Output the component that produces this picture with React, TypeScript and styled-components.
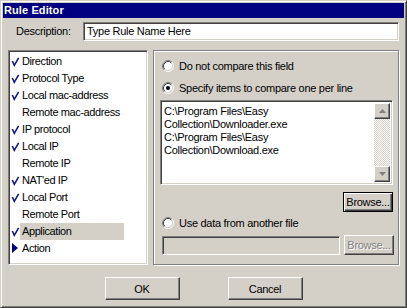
import React from "react";
import styled, { createGlobalStyle, css } from "styled-components";

const Global = createGlobalStyle`
  html, body { margin: 0; padding: 0; background: #d4d0c8; }
  body { font-family: "Liberation Sans", Arial, sans-serif; font-size: 11px; color: #000; }
  * { box-sizing: border-box; }
`;

const FACE = "#d4d0c8";

const raised = css`
  border: 1px solid;
  border-color: #fff #404040 #404040 #fff;
  box-shadow: inset -1px -1px #808080, inset 1px 1px ${FACE};
`;

const sunken = css`
  border: 1px solid;
  border-color: #808080 #fff #fff #808080;
  box-shadow: inset 1px 1px #404040, inset -1px -1px ${FACE};
`;

const Window = styled.div`
  width: 407px;
  height: 308px;
  background: ${FACE};
  border: 1px solid;
  border-color: ${FACE} #404040 #404040 ${FACE};
  box-shadow: inset 1px 1px #fff, inset -1px -1px #808080;
  padding: 2px;
  display: flex;
  flex-direction: column;
  letter-spacing: -0.28px;
`;

const TitleBar = styled.div`
  height: 15px;
  background: #000080;
  color: #fff;
  font-weight: bold;
  font-size: 11px;
  line-height: 15px;
  padding-left: 1px;
  letter-spacing: 0.1px;
`;

const DescRow = styled.div`
  display: flex;
  align-items: center;
  margin-top: 4px;
  padding-left: 13px;
`;

const Label = styled.span`
  width: 67px;
  line-height: 13px;
`;

const Field = styled.div<{ $disabled?: boolean; $w: number }>`
  ${sunken};
  width: ${(p) => p.$w}px;
  height: 19px;
  background: ${(p) => (p.$disabled ? FACE : "#fff")};
  padding: 2px 3px;
  line-height: 13px;
  white-space: nowrap;
`;

const Main = styled.div`
  display: flex;
  margin-top: 9px;
  padding-left: 5px;
  height: 216px;
  gap: 5px;
`;

const ListBox = styled.div`
  ${sunken};
  width: 140px;
  height: 215px;
  background: #fff;
  padding: 2px 2px;
  display: flex;
  flex-direction: column;
`;

const Row = styled.div`
  height: 17px;
  display: flex;
  align-items: center;
`;

const Mark = styled.svg`
  width: 9px;
  height: 17px;
  flex: none;
`;

const ItemLabel = styled.span<{ $selected?: boolean }>`
  width: 104px;
  height: 17px;
  line-height: 17px;
  padding-left: 2px;
  white-space: nowrap;
  letter-spacing: -0.4px;
  background: ${(p) => (p.$selected ? FACE : "transparent")};
`;

const Panel = styled.div`
  width: 246px;
  height: 215px;
  border: 1px solid #808080;
  box-shadow: inset 1px 1px #fff, 1px 1px #fff;
  display: flex;
  flex-direction: column;
  padding: 1px 0 0 1px;
`;

const RadioRow = styled.label<{ $mt: number }>`
  display: flex;
  align-items: center;
  height: 14px;
  margin-top: ${(p) => p.$mt}px;
  margin-left: 7px;
  gap: 5px;
  line-height: 13px;
`;

const TextArea = styled.div`
  ${sunken};
  margin: 5px 0 0 5px;
  width: 233px;
  height: 85px;
  background: #fff;
  display: flex;
  padding: 2px;
`;

const TextLines = styled.div`
  flex: 1;
  padding: 2px 0 0 1px;
  line-height: 13px;
`;

const ScrollBar = styled.div`
  width: 16px;
  display: flex;
  flex-direction: column;
`;

const ScrollBtn = styled.div`
  ${raised};
  width: 16px;
  height: 16px;
  background: ${FACE};
  display: flex;
  align-items: center;
  justify-content: center;
`;

const Track = styled.div`
  flex: 1;
  background: repeating-conic-gradient(${FACE} 0 25%, #fff 0 50%) 0 0 / 2px 2px;
`;

const BrowseRow = styled.div<{ $mt: number }>`
  display: flex;
  justify-content: flex-end;
  margin-top: ${(p) => p.$mt}px;
  padding-right: 5px;
`;

const FileRow = styled.div`
  display: flex;
  align-items: center;
  margin-top: 5px;
  margin-left: 7px;
  gap: 4px;
`;

const Button = styled.button<{ $w: number; $h: number; $focus?: boolean; $disabled?: boolean }>`
  ${raised};
  width: ${(p) => p.$w}px;
  height: ${(p) => p.$h}px;
  background: ${FACE};
  font-family: "Liberation Sans", Arial, sans-serif;
  font-size: 11px;
  letter-spacing: -0.28px;
  padding: 0;
  color: ${(p) => (p.$disabled ? "#808080" : "#000")};
  text-shadow: ${(p) => (p.$disabled ? "1px 1px #fff" : "none")};
  ${(p) =>
    p.$focus &&
    css`
      border-color: #000;
      box-shadow: inset 1px 1px #fff, inset -1px -1px #404040, inset -2px -2px #808080;
    `}
`;

const ButtonRow = styled.div`
  display: flex;
  justify-content: center;
  gap: 48px;
  margin-top: 11px;
`;

const Radio = ({ checked }: { checked?: boolean }) => (
  <svg width="12" height="12" viewBox="0 0 12 12">
    <circle cx="6" cy="6" r="4.5" fill="#fff" />
    <path d="M2.11 9.89 A5.5 5.5 0 0 1 9.89 2.11" fill="none" stroke="#808080" strokeWidth="1" />
    <path d="M9.89 2.11 A5.5 5.5 0 0 1 2.11 9.89" fill="none" stroke="#fff" strokeWidth="1" />
    <path d="M2.82 9.18 A4.5 4.5 0 0 1 9.18 2.82" fill="none" stroke="#404040" strokeWidth="1" />
    <path d="M9.18 2.82 A4.5 4.5 0 0 1 2.82 9.18" fill="none" stroke={FACE} strokeWidth="1" />
    {checked && <circle cx="6" cy="6" r="2" fill="#000" />}
  </svg>
);

type Item = { label: string; mark: "check" | "none" | "arrow"; selected?: boolean };

const items: Item[] = [
  { label: "Direction", mark: "check" },
  { label: "Protocol Type", mark: "check" },
  { label: "Local mac-address", mark: "check" },
  { label: "Remote mac-address", mark: "none" },
  { label: "IP protocol", mark: "check" },
  { label: "Local IP", mark: "check" },
  { label: "Remote IP", mark: "none" },
  { label: "NAT'ed IP", mark: "check" },
  { label: "Local Port", mark: "check" },
  { label: "Remote Port", mark: "none" },
  { label: "Application", mark: "check", selected: true },
  { label: "Action", mark: "arrow" },
];

const MarkIcon = ({ mark }: { mark: Item["mark"] }) => (
  <Mark viewBox="0 0 9 17">
    {mark === "check" && (
      <path d="M1.3 8 L3.3 12.3 L7.6 4.8" fill="none" stroke="#14148a" strokeWidth="1.6" />
    )}
    {mark === "arrow" && <polygon points="1,3 7,8 1,13" fill="#000080" />}
  </Mark>
);

export default function App() {
  return (
    <>
      <Global />
      <Window>
        <TitleBar>Rule Editor</TitleBar>
        <DescRow>
          <Label>Description:</Label>
          <Field $w={316}>Type Rule Name Here</Field>
        </DescRow>
        <Main>
          <ListBox>
            {items.map((it) => (
              <Row key={it.label}>
                <MarkIcon mark={it.mark} />
                <ItemLabel $selected={it.selected}>{it.label}</ItemLabel>
              </Row>
            ))}
          </ListBox>
          <Panel>
            <RadioRow $mt={7}>
              <Radio />
              <span>Do not compare this field</span>
            </RadioRow>
            <RadioRow $mt={8}>
              <Radio checked />
              <span>Specify items to compare one per line</span>
            </RadioRow>
            <TextArea>
              <TextLines>
                <div>C:\Program Files\Easy</div>
                <div>Collection\Downloader.exe</div>
                <div>C:\Program Files\Easy</div>
                <div>Collection\Download.exe</div>
              </TextLines>
              <ScrollBar>
                <ScrollBtn>
                  <svg width="7" height="5" viewBox="0 0 7 5">
                    <polygon points="3.5,0 7,4 0,4" fill="#808080" />
                  </svg>
                </ScrollBtn>
                <Track />
                <ScrollBtn>
                  <svg width="7" height="5" viewBox="0 0 7 5">
                    <polygon points="0,0 7,0 3.5,4" fill="#808080" />
                  </svg>
                </ScrollBtn>
              </ScrollBar>
            </TextArea>
            <BrowseRow $mt={7}>
              <Button $w={50} $h={20} $focus>
                Browse...
              </Button>
            </BrowseRow>
            <RadioRow $mt={4}>
              <Radio />
              <span>Use data from another file</span>
            </RadioRow>
            <FileRow>
              <Field $w={178} $disabled />
              <Button $w={50} $h={20} $disabled>
                Browse...
              </Button>
            </FileRow>
          </Panel>
        </Main>
        <ButtonRow>
          <Button $w={75} $h={23}>OK</Button>
          <Button $w={75} $h={23}>Cancel</Button>
        </ButtonRow>
      </Window>
    </>
  );
}
